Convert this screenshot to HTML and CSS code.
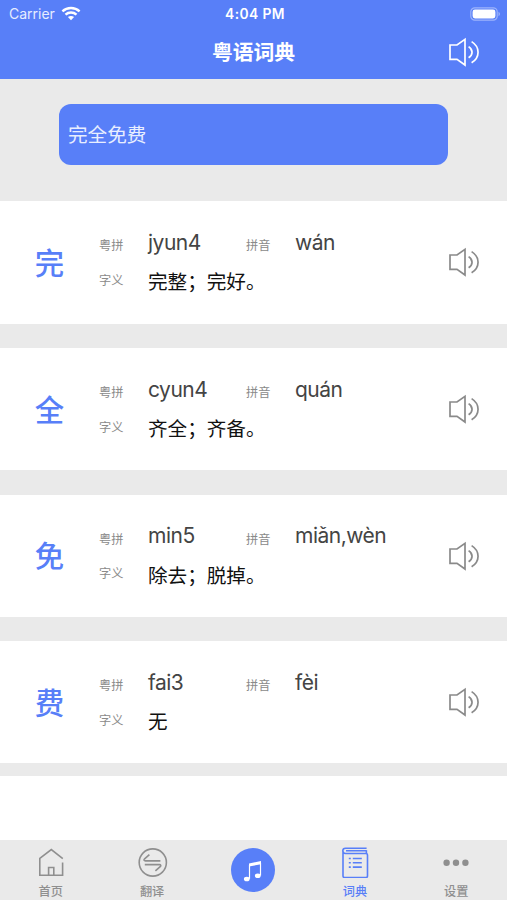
FILE: index.html
```html
<!DOCTYPE html>
<html lang="zh-CN">
<head>
    <meta charset="UTF-8">
    <meta name="viewport" content="width=device-width, initial-scale=1.0">
    <title>粤语词典</title>
    <link rel="stylesheet" href="styles.css">
</head>
<body>
    <svg class="symbols" width="0" height="0">
        <symbol id="speaker" viewBox="0 0 32 30">
            <path d="M2 8h7L17 2.4v25.6L9 22.4h-7z M20.6 9.6c4.6 3 4.6 8.2 0 11.2 M23.6 4.6c8.6 5.4 8.6 15.8 0 21.2"/>
        </symbol>
    </svg>

    <header class="header">
        <div class="status-bar">
            <div class="carrier">
                <span>Carrier</span>
                <svg class="wifi" viewBox="0 0 20 15">
                    <path d="M1.4 5.4c4.9-4.6 12.3-4.6 17.2 0" />
                    <path d="M4.5 8.7c3.1-2.9 7.9-2.9 11 0" />
                    <path class="wifi-dot" d="M6.9 11c1.8-1.5 4.4-1.5 6.2 0L10 14.2z" />
                </svg>
            </div>
            <div class="time">4:04 PM</div>
            <div class="battery">
                <svg viewBox="0 0 31 14">
                    <rect class="battery-case" x="0.8" y="0.8" width="26.4" height="12.4" rx="4"/>
                    <rect class="battery-level" x="2.6" y="2.5" width="22.8" height="9" rx="2.4"/>
                    <path class="battery-tip" d="M28.5 4.8c2 .8 2 3.6 0 4.4z"/>
                </svg>
            </div>
        </div>
        <div class="title-bar">
            <h1>粤语词典</h1>
            <button class="sound" aria-label="朗读"><svg><use href="#speaker"/></svg></button>
        </div>
    </header>

    <div class="search">
        <input type="text" value="完全免费">
    </div>

    <main class="list">
        <div class="word">
            <div class="char">完</div>
            <div class="info">
                <span class="label">粤拼</span><span class="pinyin">jyun4</span>
                <span class="label">拼音</span><span class="pinyin">wán</span>
                <span class="label">字义</span><span class="meaning">完整；完好。</span>
            </div>
            <button class="sound" aria-label="朗读"><svg><use href="#speaker"/></svg></button>
        </div>
        <div class="word">
            <div class="char">全</div>
            <div class="info">
                <span class="label">粤拼</span><span class="pinyin">cyun4</span>
                <span class="label">拼音</span><span class="pinyin">quán</span>
                <span class="label">字义</span><span class="meaning">齐全；齐备。</span>
            </div>
            <button class="sound" aria-label="朗读"><svg><use href="#speaker"/></svg></button>
        </div>
        <div class="word">
            <div class="char">免</div>
            <div class="info">
                <span class="label">粤拼</span><span class="pinyin">min5</span>
                <span class="label">拼音</span><span class="pinyin">miǎn,wèn</span>
                <span class="label">字义</span><span class="meaning">除去；脱掉。</span>
            </div>
            <button class="sound" aria-label="朗读"><svg><use href="#speaker"/></svg></button>
        </div>
        <div class="word">
            <div class="char">费</div>
            <div class="info">
                <span class="label">粤拼</span><span class="pinyin">fai3</span>
                <span class="label">拼音</span><span class="pinyin">fèi</span>
                <span class="label">字义</span><span class="meaning">无</span>
            </div>
            <button class="sound" aria-label="朗读"><svg><use href="#speaker"/></svg></button>
        </div>
        <div class="rest"></div>
    </main>

    <nav class="tabs">
        <a class="tab">
            <svg viewBox="0 0 32 32"><path d="M27.6 16.5V29.3H4.8V12.4L16.3 3.5 27.8 12.6 M13.6 29.3V21.5H18.8V29.3"/></svg>
            <span>首页</span>
        </a>
        <a class="tab">
            <svg viewBox="0 0 32 32">
                <circle cx="16.8" cy="16.5" r="13.6"/>
                <path d="M13.4 8.6 8.6 12.8c-1.1 1.1-.6 2.1.8 2.1H24.4 M8.8 18.6H23.4c1.4 0 1.9 1 .8 2.1L19.4 24.9"/>
            </svg>
            <span>翻译</span>
        </a>
        <a class="tab play">
            <svg viewBox="0 0 44 44">
                <path class="beam" d="M18 15.4 30 13v3.2L18 18.6z"/>
                <path d="M18.5 17v13.8 M29.5 15v12.6"/>
                <ellipse cx="15.8" cy="31" rx="2.9" ry="2.3"/>
                <ellipse cx="26.8" cy="27.8" rx="2.9" ry="2.3"/>
            </svg>
        </a>
        <a class="tab active">
            <svg viewBox="0 0 32 32">
                <path d="M27.4 7.2V4.2 M27.6 2.2H6.5c-3.6 0-3.6 5.3 0 5.3H27c1 0 1.5.5 1.5 1.5V30c0 1-.5 1.5-1.5 1.5H5.5c-1 0-1.5-.5-1.5-1.5V5 M7 4.8h20.6"/>
                <path d="M9.8 12.5h2 M13.8 12.5h9 M9.8 16.8h2 M13.8 16.8h9 M9.8 21.1h2 M13.8 21.1h9"/>
            </svg>
            <span>词典</span>
        </a>
        <a class="tab more">
            <svg viewBox="0 0 32 32">
                <circle cx="6.6" cy="16.8" r="3.2"/>
                <circle cx="16" cy="16.8" r="3.2"/>
                <circle cx="25.4" cy="16.8" r="3.2"/>
            </svg>
            <span>设置</span>
        </a>
    </nav>
</body>
</html>
```

FILE: styles.css
```css
* {
    box-sizing: border-box;
}

body {
    display: flex;
    flex-direction: column;
    height: 100vh;
    margin: 0;
    overflow: hidden;
    background-color: #eaeaea;
    font-family: Inter, "Noto Sans CJK SC", sans-serif;
}

svg {
    display: block;
    fill: none;
}

.symbols {
    position: absolute;
}

.header {
    flex: none;
    height: 79px;
    background-color: #587ff8;
    color: #fff;
}

.status-bar {
    display: grid;
    grid-template-columns: 1fr auto 1fr;
    align-items: center;
    height: 27px;
    padding: 0 6px 0 9px;
    font-size: 14px;
}

.carrier {
    display: flex;
    align-items: center;
    gap: 6px;
    color: #e6ecff;
}

.wifi {
    width: 20px;
    height: 15px;
    stroke: #fff;
    stroke-width: 2.4;
}

.wifi .wifi-dot {
    fill: #fff;
    stroke: none;
}

.time {
    font-size: 13.8px;
    font-weight: 600;
    letter-spacing: 0.4px;
}

.battery svg {
    width: 31px;
    height: 14px;
    margin-left: auto;
}

.battery-case {
    stroke: #9db4fb;
    stroke-width: 1.2;
}

.battery-level {
    fill: #fff;
}

.battery-tip {
    fill: #9db4fb;
}

.title-bar {
    display: grid;
    grid-template-columns: 1fr auto 1fr;
    align-items: center;
    height: 50px;
    padding-right: 27px;
}

.title-bar h1 {
    grid-column: 2;
    margin: 0 0 2px 27px;
    font-size: 20.8px;
    font-weight: 700;
}

.sound {
    justify-self: end;
    width: 32px;
    height: 30px;
    padding: 0;
    border: none;
    background: none;
    stroke: #8a8a8a;
    stroke-width: 1.7;
}

.sound svg {
    width: 32px;
    height: 30px;
}

.title-bar .sound {
    stroke: #fff;
}

.search {
    flex: none;
    height: 122.3px;
    padding: 24.6px 59px 0;
}

.search input {
    display: block;
    width: 389px;
    height: 61px;
    padding: 0 9px 2px;
    border: none;
    border-radius: 12px;
    background-color: #587ff8;
    color: #e8eeff;
    font-family: inherit;
    font-size: 19.6px;
}

.list {
    display: flex;
    flex-direction: column;
    flex: 1;
    gap: 24.4px;
    min-height: 0;
}

.word {
    display: grid;
    grid-template-columns: 99px 1fr 32px;
    align-items: center;
    flex: none;
    height: 122.25px;
    padding-right: 27px;
    background-color: #fff;
}

.char {
    padding-bottom: 3px;
    color: #587ff8;
    font-size: 29.4px;
    font-weight: 500;
    text-align: center;
}

.info {
    display: grid;
    grid-template-columns: 49px 98px 49px 1fr;
    grid-template-rows: 40px 35px;
    align-items: center;
    padding-bottom: 5px;
}

.label {
    padding-top: 6px;
    color: #8a8a8a;
    font-size: 12.2px;
}

.label:nth-of-type(5) {
    padding-top: 0;
}

.pinyin {
    color: #444;
    font-size: 21px;
    letter-spacing: -0.5px;
}

.meaning {
    grid-column: 2 / -1;
    padding-top: 2px;
    color: #111;
    font-size: 19.6px;
}

.rest {
    flex: 1;
    margin-top: -12.2px;
    background-color: #fff;
}

.tabs {
    display: grid;
    grid-template-columns: repeat(5, 1fr);
    flex: none;
    height: 60px;
}

.tab {
    display: flex;
    flex-direction: column;
    align-items: center;
    padding-top: 6px;
    color: #8f8f8f;
    font-size: 12.2px;
    font-weight: 500;
    line-height: 18px;
}

.tab svg {
    width: 32px;
    height: 32px;
    margin-bottom: 5px;
    stroke: currentColor;
    stroke-width: 1.6;
}

.tab.active {
    color: #587ff8;
}

.tab.more svg {
    fill: currentColor;
    stroke: none;
}

.tab.play {
    padding-top: 8px;
}

.tab.play svg {
    width: 44px;
    height: 44px;
    border-radius: 50%;
    background-color: #587ff8;
    stroke: #fff;
    stroke-width: 1.2;
}

.play .beam,
.play ellipse {
    fill: #fff;
    stroke: none;
}
```
